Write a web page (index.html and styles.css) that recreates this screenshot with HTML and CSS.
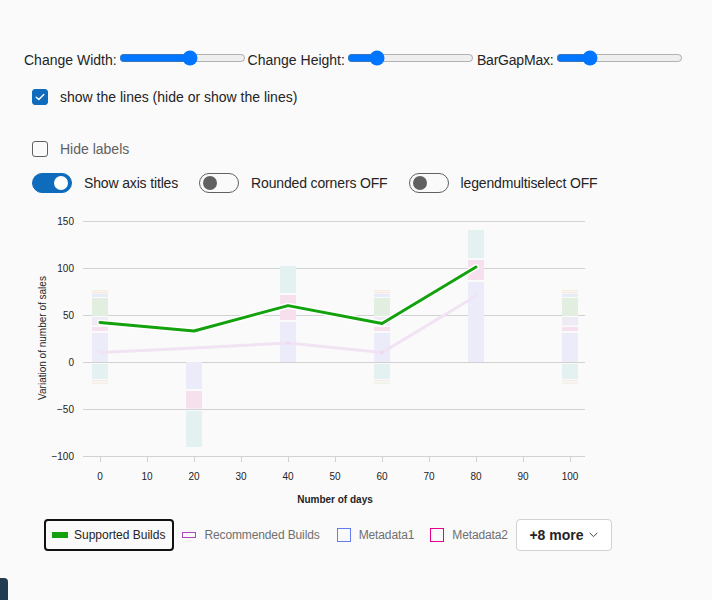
FILE: index.html
```html
<!DOCTYPE html>
<html>
<head>
<meta charset="utf-8">
<link rel="stylesheet" href="styles.css">
</head>
<body>
<div class="page">
  <div class="slider-row">
    <span class="lbl">Change Width:</span><input class="rng" type="range" min="0" max="100" value="57">
    <span class="lbl">Change Height:</span><input class="rng" type="range" min="0" max="100" value="20">
    <span class="lbl bargap">BarGapMax:</span><input class="rng" type="range" min="0" max="100" value="24">
  </div>

  <div class="check-row first">
    <span class="cb on"><svg width="10" height="8" viewBox="0 0 10 8"><path d="M1.2 4.2 L3.8 6.6 L8.8 1.4" fill="none" stroke="#fff" stroke-width="1.4" stroke-linecap="round" stroke-linejoin="round"/></svg></span>
    <span class="ctext">show the lines (hide or show the lines)</span>
  </div>

  <div class="check-row second">
    <span class="cb"></span>
    <span class="ctext muted">Hide labels</span>
  </div>

  <div class="toggle-row">
    <div class="tg-item"><span class="tg on"><span class="knob"></span></span><span class="ctext">Show axis titles</span></div>
    <div class="tg-item"><span class="tg"><span class="knob"></span></span><span class="ctext">Rounded corners OFF</span></div>
    <div class="tg-item"><span class="tg"><span class="knob"></span></span><span class="ctext">legendmultiselect OFF</span></div>
  </div>

  <svg class="chart" width="600" height="305" viewBox="24 205 600 305">
    <g class="grid" stroke="#d1d1d1" stroke-width="1">
      <line x1="83" y1="221.5" x2="585" y2="221.5"/>
      <line x1="83" y1="268.5" x2="585" y2="268.5"/>
      <line x1="83" y1="315.5" x2="585" y2="315.5"/>
      <line x1="83" y1="362.5" x2="585" y2="362.5"/>
      <line x1="83" y1="409.5" x2="585" y2="409.5"/>
      <line x1="83" y1="456.5" x2="585" y2="456.5"/>
      <line x1="100.5" y1="456" x2="100.5" y2="462"/>
      <line x1="147.5" y1="456" x2="147.5" y2="462"/>
      <line x1="194.5" y1="456" x2="194.5" y2="462"/>
      <line x1="241.5" y1="456" x2="241.5" y2="462"/>
      <line x1="288.5" y1="456" x2="288.5" y2="462"/>
      <line x1="335.5" y1="456" x2="335.5" y2="462"/>
      <line x1="382.5" y1="456" x2="382.5" y2="462"/>
      <line x1="429.5" y1="456" x2="429.5" y2="462"/>
      <line x1="476.5" y1="456" x2="476.5" y2="462"/>
      <line x1="523.5" y1="456" x2="523.5" y2="462"/>
      <line x1="570.5" y1="456" x2="570.5" y2="462"/>
    </g>
    <g class="ylab" text-anchor="end">
      <text x="74" y="225">150</text>
      <text x="74" y="272">100</text>
      <text x="74" y="319">50</text>
      <text x="74" y="366">0</text>
      <text x="74" y="413">−50</text>
      <text x="74" y="460">−100</text>
    </g>
    <g class="xlab" text-anchor="middle">
      <text x="100" y="480">0</text>
      <text x="147" y="480">10</text>
      <text x="194" y="480">20</text>
      <text x="241" y="480">30</text>
      <text x="288" y="480">40</text>
      <text x="335" y="480">50</text>
      <text x="382" y="480">60</text>
      <text x="429" y="480">70</text>
      <text x="476" y="480">80</text>
      <text x="523" y="480">90</text>
      <text x="570" y="480">100</text>
    </g>
    <text class="xtitle" x="335" y="503" text-anchor="middle">Number of days</text>
    <text class="ytitle" x="0" y="0" text-anchor="middle" transform="translate(46 338) rotate(-90)">Variation of number of sales</text>

    <g id="stackA">
      <rect x="92" y="290" width="16" height="1.5" fill="#f4efdd"/>
      <rect x="92" y="292" width="16" height="1.5" fill="#fae8e8"/>
      <rect x="92" y="294" width="16" height="3" fill="#e6edf8"/>
      <rect x="92" y="298" width="16" height="18" fill="#e2efe0"/>
      <rect x="92" y="317" width="16" height="8.5" fill="#efebf5"/>
      <rect x="92" y="327" width="16" height="4" fill="#f7e0ee"/>
      <rect x="92" y="333" width="16" height="29" fill="#ebebfa"/>
      <rect x="92" y="364" width="16" height="15" fill="#e4f1f1"/>
      <rect x="92" y="380" width="16" height="1.5" fill="#f7ebe9"/>
      <rect x="92" y="382.5" width="16" height="1.5" fill="#f1f1e5"/>
    </g>
    <use href="#stackA" x="282"/>
    <use href="#stackA" x="470"/>

    <rect x="186" y="362" width="16" height="27" fill="#ebebfa"/>
    <rect x="186" y="391" width="16" height="17.5" fill="#f7e0ee"/>
    <rect x="186" y="411" width="16" height="36" fill="#e4f1f1"/>

    <rect x="280" y="266" width="16" height="27" fill="#e4f1f1"/>
    <rect x="280" y="295" width="16" height="25" fill="#f7e0ee"/>
    <rect x="280" y="322" width="16" height="40" fill="#ebebfa"/>

    <rect x="468" y="230" width="16" height="28" fill="#e4f1f1"/>
    <rect x="468" y="260" width="16" height="20" fill="#f7e0ee"/>
    <rect x="468" y="282" width="16" height="80" fill="#ebebfa"/>

    <polyline points="100,352.6 194,348 288,343 382,352.6 476,296" fill="none" stroke="#f1e2f4" stroke-width="3" stroke-linejoin="round" stroke-linecap="round"/>
    <g fill="#ecd6f0">
      <circle cx="288" cy="343" r="1.6"/>
      <circle cx="382" cy="352.6" r="1.6"/>
    </g>
    <polyline points="100,322.5 194,331 288,305.6 382,323.5 476,267" fill="none" stroke="#ffffff" stroke-width="6" stroke-linejoin="round" stroke-linecap="round"/>
    <polyline points="100,322.5 194,331 288,305.6 382,323.5 476,267" fill="none" stroke="#13a10e" stroke-width="3" stroke-linejoin="round" stroke-linecap="round"/>
  </svg>

  <div class="legend">
    <div class="lg-item selected"><span class="sw sw-green"></span><span class="lg-text dark">Supported Builds</span></div>
    <div class="lg-item"><span class="sw sw-purple"></span><span class="lg-text">Recommended Builds</span></div>
    <div class="lg-item"><span class="sw sw-box blue"></span><span class="lg-text">Metadata1</span></div>
    <div class="lg-item"><span class="sw sw-box magenta"></span><span class="lg-text">Metadata2</span></div>
    <button class="more">+8 more <svg width="9" height="6" viewBox="0 0 9 6"><path d="M1 1.2 L4.5 4.6 L8 1.2" fill="none" stroke="#424242" stroke-width="1" stroke-linecap="round" stroke-linejoin="round"/></svg></button>
  </div>
</div>
<div class="corner-tab"></div>
</body>
</html>
```

FILE: styles.css
```css
html, body {
  margin: 0;
  padding: 0;
  background: #fafafa;
}
body {
  font-family: "Liberation Sans", Arial, sans-serif;
  color: #242424;
  font-size: 14px;
}
.page {
  padding: 0 24px;
}
.slider-row {
  display: flex;
  align-items: center;
  height: 20px;
  margin-top: 48px;
}
.lbl {
  line-height: 20px;
  padding-top: 3px;
  white-space: nowrap;
  flex-shrink: 0;
}
.bargap {
  margin-left: 1px;
  letter-spacing: -0.2px;
}
.rng {
  width: 127px;
  margin: 0 2px;
  flex-shrink: 0;
  accent-color: #0075ff;
}
.check-row {
  display: flex;
  align-items: center;
  height: 20px;
  padding-left: 8px;
  gap: 12px;
}
.check-row.first {
  margin-top: 19px;
}
.check-row.second {
  margin-top: 32px;
}
.cb {
  width: 16px;
  height: 16px;
  box-sizing: border-box;
  border: 1px solid #616161;
  border-radius: 3px;
  display: flex;
  align-items: center;
  justify-content: center;
}
.cb.on {
  background: #0f6cbd;
  border-color: #0f6cbd;
}
.ctext {
  line-height: 20px;
  white-space: nowrap;
}
.muted {
  color: #616161;
}
.toggle-row {
  display: flex;
  align-items: center;
  height: 20px;
  margin-top: 14px;
  padding-left: 8px;
  gap: 21px;
}
.toggle-row .ctext {
  letter-spacing: -0.15px;
}
.tg-item {
  display: flex;
  align-items: center;
  gap: 12px;
}
.tg {
  width: 40px;
  height: 20px;
  box-sizing: border-box;
  border: 1px solid #616161;
  border-radius: 10px;
  display: flex;
  align-items: center;
  padding: 0 3px;
  justify-content: flex-start;
}
.tg .knob {
  width: 14px;
  height: 14px;
  border-radius: 50%;
  background: #616161;
}
.tg.on {
  background: #0f6cbd;
  border-color: #0f6cbd;
  justify-content: flex-end;
}
.tg.on .knob {
  background: #ffffff;
}
.chart {
  display: block;
  margin-top: 12px;
  font-family: "Liberation Sans", Arial, sans-serif;
}
.ylab text, .xlab text {
  font-size: 10px;
  fill: #242424;
}
.xtitle {
  font-size: 10px;
  font-weight: 600;
  fill: #242424;
}
.ytitle {
  font-size: 10px;
  fill: #242424;
}
.legend {
  display: flex;
  align-items: center;
  margin-top: 9px;
  margin-left: 20px;
  height: 32px;
}
.lg-item {
  display: flex;
  align-items: center;
  height: 32px;
  box-sizing: border-box;
  padding: 0 8px;
  gap: 8px;
  white-space: nowrap;
}
.lg-item.selected {
  border: 2px solid #111111;
  border-radius: 4px;
  padding: 0 7px 0 6px;
  gap: 6px;
}
.lg-text {
  font-size: 12px;
  color: #707070;
  letter-spacing: -0.12px;
}
.lg-text.dark {
  color: #242424;
  letter-spacing: 0;
}
.sw {
  display: block;
  box-sizing: border-box;
}
.sw-green {
  width: 16px;
  height: 6px;
  background: #13a10e;
}
.sw-purple {
  width: 14px;
  height: 6px;
  border: 1px solid #b146c2;
}
.lg-item:nth-child(3) {
  margin-left: 1px;
}
.sw-box {
  width: 14px;
  height: 14px;
  border: 1.5px solid #637cef;
}
.sw-box.magenta {
  border-color: #e3008c;
}
.more {
  height: 32px;
  width: 96px;
  box-sizing: border-box;
  border: 1px solid #d1d1d1;
  border-radius: 4px;
  background: #ffffff;
  font-family: "Liberation Sans", Arial, sans-serif;
  font-size: 14px;
  font-weight: 600;
  color: #242424;
  display: flex;
  align-items: center;
  justify-content: center;
  gap: 6px;
  padding: 0;
}
.corner-tab {
  position: fixed;
  left: 0;
  bottom: 0;
  width: 8px;
  height: 22px;
  background: #213b50;
  border-top-right-radius: 4px;
}
```
